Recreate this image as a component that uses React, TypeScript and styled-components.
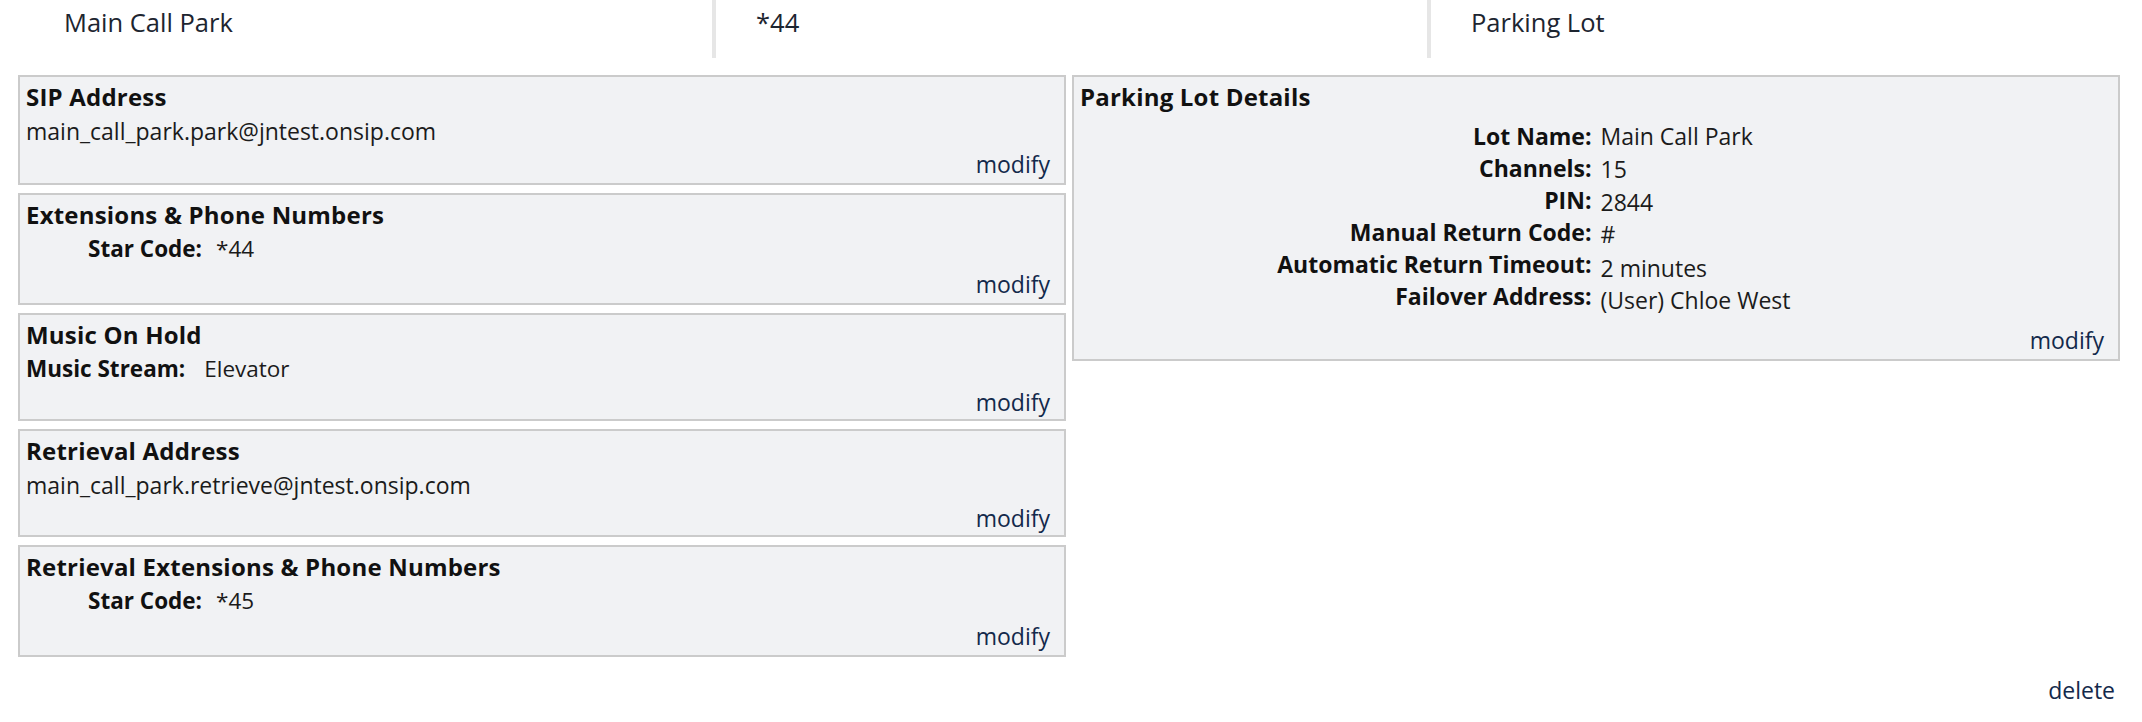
import * as React from 'react'
import styled, { createGlobalStyle } from 'styled-components'

const GlobalStyle = createGlobalStyle`
  html, body {
    margin: 0;
    padding: 0;
    background: #ffffff;
  }
  body {
    font-family: "Open Sans", Lato, sans-serif;
    color: #1b1b1b;
  }
`

const Page = styled.div`
  width: 2142px;
  height: 722px;
  box-sizing: border-box;
  padding: 0 22px 0 18px;
`

const Header = styled.div`
  display: grid;
  grid-template-columns: 694px 715px 1fr;
  height: 58px;
  margin-left: -18px;
  padding-left: 18px;
`

const HeaderCell = styled.div<{ $first?: boolean }>`
  padding-left: ${(p) => (p.$first ? '46px' : '40px')};
  padding-top: 5px;
  font-size: 25.5px;
  color: #1d2530;
  border-left: ${(p) => (p.$first ? 'none' : '4px solid #e6e6e6')};
`

const Columns = styled.div`
  display: grid;
  grid-template-columns: 1048px 1048px;
  gap: 6px;
  margin-top: 17px;
  align-items: start;
`

const Stack = styled.div`
  display: flex;
  flex-direction: column;
  gap: 8px;
`

const Box = styled.div<{ $h: number }>`
  box-sizing: border-box;
  height: ${(p) => p.$h}px;
  background: #f1f2f4;
  border: 2px solid #cbcbcb;
  padding: 4px 14px 4px 6px;
  display: flex;
  flex-direction: column;
`

const Title = styled.div`
  font-size: 24px;
  font-weight: 700;
  letter-spacing: 0.2px;
  color: #111;
  line-height: 32px;
`

const Line = styled.div`
  font-size: 23px;
  line-height: 36px;
  color: #1b1b1b;
`

const Field = styled.div<{ $indent?: boolean }>`
  font-size: 22.5px;
  line-height: 36px;
  padding-left: ${(p) => (p.$indent ? '62px' : '0')};
  display: flex;
  gap: ${(p) => (p.$indent ? '14px' : '19px')};
`

const Label = styled.span`
  font-weight: 700;
  color: #111;
`

const Modify = styled.a`
  margin-top: auto;
  align-self: flex-end;
  font-size: 23px;
  line-height: 30px;
  color: #13294b;
  text-decoration: none;
`

const DetailTable = styled.div`
  display: grid;
  grid-template-columns: 1fr 1fr;
  column-gap: 9px;
  margin-top: 7px;
  margin-left: -6px;
  margin-right: -14px;
`

const DetailLabel = styled.div`
  text-align: right;
  font-size: 23px;
  font-weight: 700;
  line-height: 32px;
  color: #111;
`

const DetailValue = styled.div<{ $drop: number }>`
  font-size: 23px;
  line-height: 32px;
  color: #1b1b1b;
  padding-top: ${(p) => p.$drop}px;
  margin-bottom: ${(p) => -p.$drop}px;
`

const Footer = styled.div`
  display: flex;
  justify-content: flex-end;
  margin-top: 17px;
  padding-right: 5px;
`

const Delete = styled.a`
  font-size: 23px;
  color: #13294b;
  text-decoration: none;
`

const details: [string, string, number][] = [
  ['Lot Name:', 'Main Call Park', 0],
  ['Channels:', '15', 1],
  ['PIN:', '2844', 2],
  ['Manual Return Code:', '#', 2],
  ['Automatic Return Timeout:', '2 minutes', 4],
  ['Failover Address:', '(User) Chloe West', 4],
]

export default function App() {
  return (
    <>
      <GlobalStyle />
      <Page>
        <Header>
          <HeaderCell $first>Main Call Park</HeaderCell>
          <HeaderCell>*44</HeaderCell>
          <HeaderCell>Parking Lot</HeaderCell>
        </Header>
        <Columns>
          <Stack>
            <Box $h={110}>
              <Title>SIP Address</Title>
              <Line>main_call_park.park@jntest.onsip.com</Line>
              <Modify>modify</Modify>
            </Box>
            <Box $h={112}>
              <Title>Extensions &amp; Phone Numbers</Title>
              <Field $indent>
                <Label>Star Code:</Label>
                <span>*44</span>
              </Field>
              <Modify>modify</Modify>
            </Box>
            <Box $h={108}>
              <Title>Music On Hold</Title>
              <Field>
                <Label>Music Stream:</Label>
                <span>Elevator</span>
              </Field>
              <Modify>modify</Modify>
            </Box>
            <Box $h={108}>
              <Title>Retrieval Address</Title>
              <Line>main_call_park.retrieve@jntest.onsip.com</Line>
              <Modify>modify</Modify>
            </Box>
            <Box $h={112}>
              <Title>Retrieval Extensions &amp; Phone Numbers</Title>
              <Field $indent>
                <Label>Star Code:</Label>
                <span>*45</span>
              </Field>
              <Modify>modify</Modify>
            </Box>
          </Stack>
          <Box $h={286}>
            <Title>Parking Lot Details</Title>
            <DetailTable>
              {details.map(([label, value, drop]) => (
                <React.Fragment key={label}>
                  <DetailLabel>{label}</DetailLabel>
                  <DetailValue $drop={drop}>{value}</DetailValue>
                </React.Fragment>
              ))}
            </DetailTable>
            <Modify>modify</Modify>
          </Box>
        </Columns>
        <Footer>
          <Delete>delete</Delete>
        </Footer>
      </Page>
    </>
  )
}
